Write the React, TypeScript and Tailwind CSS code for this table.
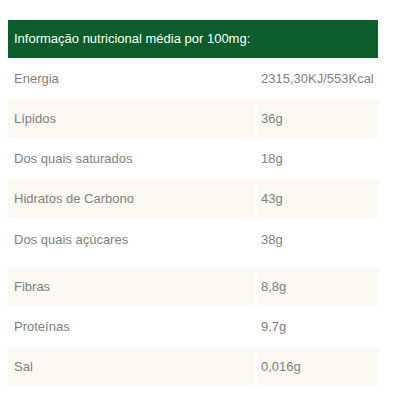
import React from "react";

const rows: { label: string; value: string; tall?: boolean }[] = [
  { label: "Energia", value: "2315,30KJ/553Kcal" },
  { label: "Lípidos", value: "36g" },
  { label: "Dos quais saturados", value: "18g" },
  { label: "Hidratos de Carbono", value: "43g" },
  { label: "Dos quais açúcares", value: "38g", tall: true },
  { label: "Fibras", value: "8,8g" },
  { label: "Proteínas", value: "9,7g" },
  { label: "Sal", value: "0,016g" },
];

export default function App() {
  return (
    <div className="w-[400px] h-[400px] bg-white font-['Liberation_Sans',Arial,sans-serif] text-[13px]">
      <div className="ml-2 pt-5 w-[370px] flex flex-col gap-y-[2px]">
        <div className="h-[38px] bg-[#0b5d2b] text-white flex items-center pl-1.5">
          Informação nutricional média por 100mg:
        </div>
        {rows.map((r, i) => {
          const bg = i % 2 === 1 ? "bg-[#faf8f0]" : "bg-white";
          const h = r.tall ? "h-[46px] items-start pt-[10px]" : "h-[38px] items-center";
          return (
            <div key={r.label} className="grid grid-cols-[247px_121px] gap-x-[2px] text-[#808080]">
              <div className={`${bg} ${h} flex pl-1.5`}>{r.label}</div>
              <div className={`${bg} ${h} flex pl-1`}>{r.value}</div>
            </div>
          );
        })}
      </div>
    </div>
  );
}
